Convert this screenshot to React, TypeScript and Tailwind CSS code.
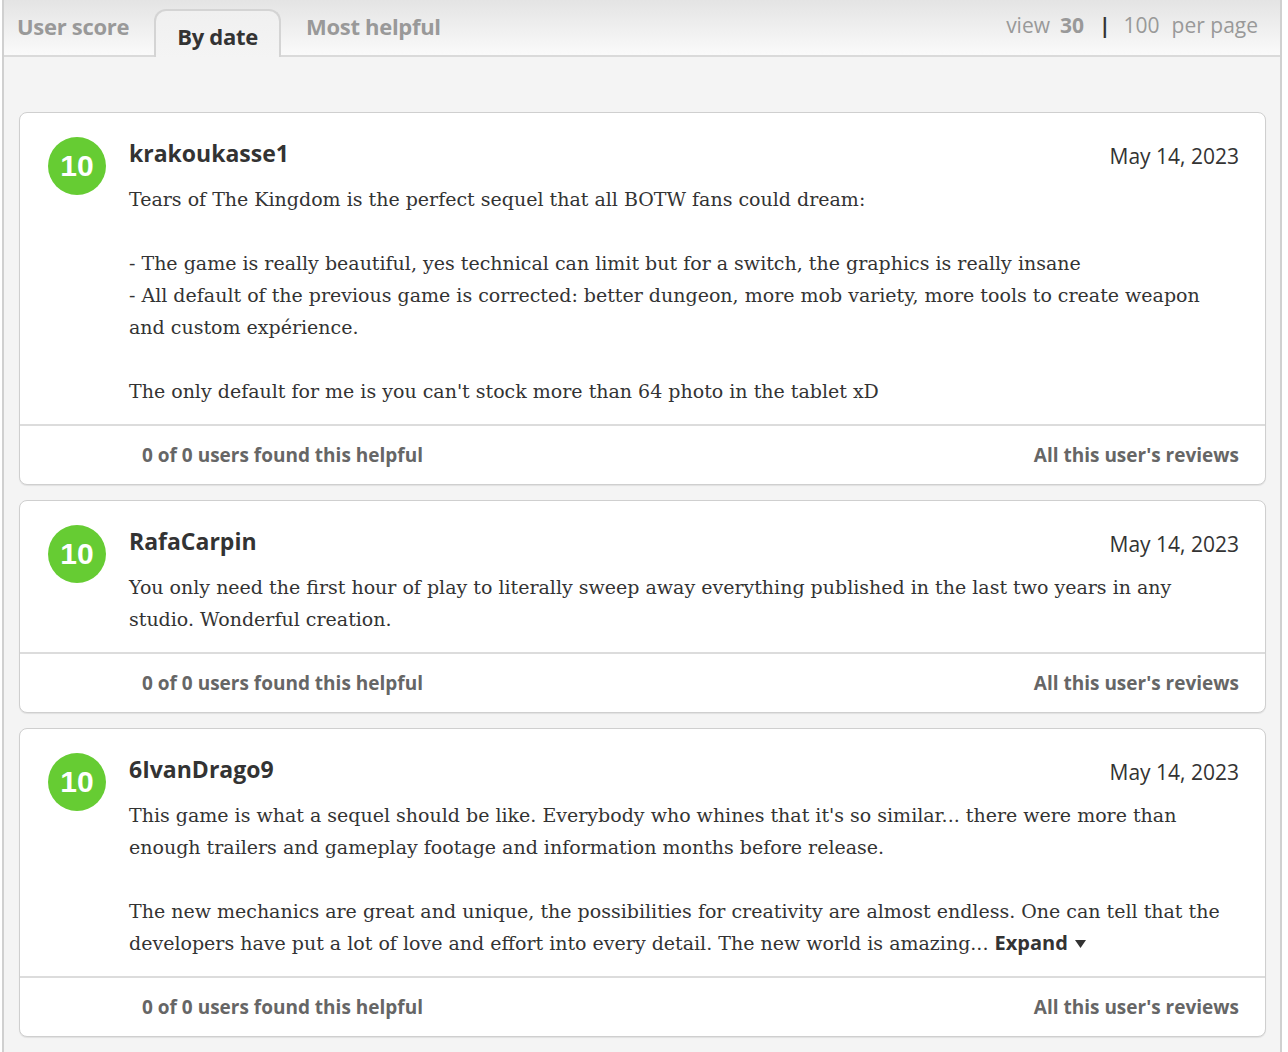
import React from 'react'

type Review = {
  id: number
  score: number
  user: string
  date: string
  paragraphs: string[]
  truncated?: boolean
}

const REVIEWS: Review[] = [
  {
    id: 1,
    score: 10,
    user: 'krakoukasse1',
    date: 'May 14, 2023',
    paragraphs: [
      'Tears of The Kingdom is the perfect sequel that all BOTW fans could dream:',
      '- The game is really beautiful, yes technical can limit but for a switch, the graphics is really insane\n- All default of the previous game is corrected: better dungeon, more mob variety, more tools to create weapon and custom expérience.',
      "The only default for me is you can't stock more than 64 photo in the tablet xD",
    ],
  },
  {
    id: 2,
    score: 10,
    user: 'RafaCarpin',
    date: 'May 14, 2023',
    paragraphs: [
      'You only need the first hour of play to literally sweep away everything published in the last two years in any studio. Wonderful creation.',
    ],
  },
  {
    id: 3,
    score: 10,
    user: '6IvanDrago9',
    date: 'May 14, 2023',
    paragraphs: [
      "This game is what a sequel should be like. Everybody who whines that it's so similar... there were more than enough trailers and gameplay footage and information months before release.",
      'The new mechanics are great and unique, the possibilities for creativity are almost endless. One can tell that the developers have put a lot of love and effort into every detail. The new world is amazing...',
    ],
    truncated: true,
  },
]

const sans = 'font-["Open_Sans","Liberation_Sans",sans-serif]'

function cn(...c: (string | false | undefined)[]) {
  return c.filter(Boolean).join(' ')
}

function ReviewCard({ review }: { review: Review }) {
  return (
    <div className="bg-white border border-[#cfcfcf] rounded-lg shadow-[0_1px_1px_rgba(0,0,0,0.08)]">
      <div className="flex gap-[23px] pl-[28px] pr-[26px] pt-[24px] pb-[17px]">
        {/* Score */}
        <div className="flex-shrink-0 w-[58px] h-[58px] rounded-full bg-[#66cc33] flex items-center justify-center">
          <span className="font-['Liberation_Sans',sans-serif] text-white font-bold text-[30px] leading-none">{review.score}</span>
        </div>

        {/* Content */}
        <div className="flex-1 min-w-0">
          <div className="flex items-start justify-between h-[32px]">
            <span className={`${sans} text-[23px] font-bold text-[#333] leading-[32px]`}>{review.user}</span>
            <span className={`${sans} text-[21px] text-[#333] leading-[32px] mt-[3px]`}>{review.date}</span>
          </div>
          <div className="mt-[14px] font-['DejaVu_Serif',serif] text-[19px] leading-[32px] text-[#333]">
            {review.paragraphs.map((p, i) => (
              <p key={i} className={cn(i > 0 && 'mt-[32px]', 'whitespace-pre-line')}>
                <span>{p}</span>
                {review.truncated && i === review.paragraphs.length - 1 && (
                  <>
                    {' '}
                    <a className={`${sans} font-bold text-[#333] text-[20px] cursor-pointer`}>
                      Expand
                      <svg width="11" height="8" viewBox="0 0 11 8" className="inline-block ml-[7px] align-[2px]">
                        <path d="M0 0 L11 0 L5.5 8 Z" fill="#333" />
                      </svg>
                    </a>
                  </>
                )}
              </p>
            ))}
          </div>
        </div>
      </div>

      {/* Footer */}
      <div className={`${sans} border-t-2 border-[#dcdcdc] h-[60px] flex items-center justify-between pl-[122px] pr-[26px] text-[19px] font-bold text-[#666]`}>
        <span>0 of 0 users found this helpful</span>
        <span>All this user's reviews</span>
      </div>
    </div>
  )
}

export default function App() {
  return (
    <div className="bg-white min-h-[1052px] pl-[2px] pr-[6px]">
      <div className="border-x-2 border-[#d0d0d0] bg-[#f4f4f4] min-h-[1052px]">
        {/* Header */}
        <div className={`${sans} h-[57px] bg-gradient-to-b from-[#e4e4e4] to-[#fafafa] border-b-2 border-[#dadada] flex items-end justify-between`}>
          <div className="flex items-end h-full">
            <div className="pl-[13px] w-[150px] h-full flex items-center pb-[3px] text-[22px] font-bold text-[#999] tracking-[-0.3px]">User score</div>
            <div className="relative mb-[-2px] h-[48px] w-[127px] rounded-t-[12px] border-2 border-b-0 border-[#d4d4d4] bg-gradient-to-b from-[#f0f0f0] to-[#f4f4f4] flex items-center justify-center pt-[4px] text-[22px] font-bold text-[#333] tracking-[-0.3px]">
              By date
            </div>
            <div className="pl-[25px] h-full flex items-center pb-[3px] text-[22px] font-bold text-[#999] tracking-[-0.3px]">Most helpful</div>
          </div>
          <div className="h-full flex items-center pb-[3px] pr-[22px] text-[21px] text-[#999]">
            <span>view</span>
            <span className="ml-[10px] font-bold">30</span>
            <span className="ml-[15px] font-bold text-[#333]">|</span>
            <span className="ml-[13px]">100</span>
            <span className="ml-[12px]">per page</span>
          </div>
        </div>

        {/* Reviews */}
        <div className="pt-[55px] pl-[15px] pr-[14px] flex flex-col gap-[15px]">
          {REVIEWS.map((r) => (
            <ReviewCard key={r.id} review={r} />
          ))}
        </div>
      </div>
    </div>
  )
}
